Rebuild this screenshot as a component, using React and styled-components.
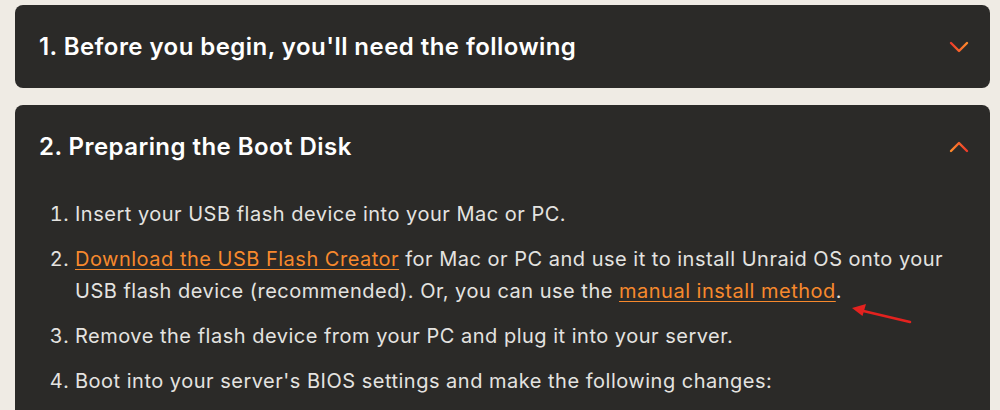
import React from 'react';
import styled, { createGlobalStyle } from 'styled-components';

const GlobalStyle = createGlobalStyle`
    html, body {
        margin: 0;
        background: #efebe4;
        font-family: Inter, "Noto Sans", sans-serif;
    }
`

const Page = styled.div`
    display: flex;
    flex-direction: column;
    gap: 17px;
    padding: 5px 10px 0 15px;
`

const Card = styled.section`
    position: relative;
    background: #2b2a28;
    border-radius: 8px;
    color: #fff;
`

const Header = styled.div`
    height: 83px;
    display: flex;
    align-items: center;
    justify-content: space-between;
    padding: 0 21px 0 24px;
    box-sizing: border-box;
`

const Title = styled.h2`
    margin: 0;
    font-size: 24px;
    font-weight: 600;
    letter-spacing: 0.45px;
    color: #fff;
`

const Chevron = styled.svg`
    width: 20px;
    height: 12px;
    transform: ${p => (p.$open ? 'rotate(180deg)' : 'none')};
`

const Steps = styled.ol`
    margin: 0;
    padding: 10px 26px 24px 60px;
    font-size: 20px;
    line-height: 32px;
    letter-spacing: 0.5px;
    color: #e4e3e0;

    li {
        margin-bottom: 13px;
    }
    li::marker {
        color: #e4e3e0;
    }
`

const Link = styled.a`
    color: #f7892d;
    text-decoration: underline;
    text-underline-offset: 3px;
    text-decoration-thickness: 1px;
`

const Pointer = styled.svg`
    position: absolute;
    left: 820px;
    top: 198px;
    width: 80px;
    height: 30px;
    overflow: visible;
`

const Toggle = ({ open }) => (
    <Chevron $open={open} viewBox="0 0 20 12">
        <defs>
            <linearGradient id={open ? 'chev-up' : 'chev-down'} x1="0" x2="1" y1="0" y2="0">
                <stop offset="0" stopColor="#ee3a2a" />
                <stop offset="1" stopColor="#ff8a2b" />
            </linearGradient>
        </defs>
        <path
            d="M2 2 L10 10 L18 2"
            fill="none"
            stroke={`url(#${open ? 'chev-up' : 'chev-down'})`}
            strokeWidth="2.4"
            strokeLinecap="round"
            strokeLinejoin="round"
        />
    </Chevron>
)

const App = () => {
    return (
        <Page>
            <GlobalStyle />
            <Card>
                <Header>
                    <Title>1. Before you begin, you'll need the following</Title>
                    <Toggle />
                </Header>
            </Card>
            <Card>
                <Header>
                    <Title>2. Preparing the Boot Disk</Title>
                    <Toggle open />
                </Header>
                <Steps>
                    <li>Insert your USB flash device into your Mac or PC.</li>
                    <li>
                        <Link href="#">Download the USB Flash Creator</Link> for Mac or PC and use it to install Unraid OS onto your USB flash device (recommended). Or, you can use the <Link href="#">manual install method</Link>.
                    </li>
                    <li>Remove the flash device from your PC and plug it into your server.</li>
                    <li>Boot into your server's BIOS settings and make the following changes:</li>
                </Steps>
                {/* red call-out arrow next to the manual install link */}
                <Pointer viewBox="0 0 80 30">
                    <path d="M75 19 L22 6.5" stroke="#e3221f" strokeWidth="2.6" strokeLinecap="round" />
                    <path d="M17 5 L31 1 L27.5 13 Z" fill="#e3221f" />
                </Pointer>
            </Card>
        </Page>
    )
}

export default App;
